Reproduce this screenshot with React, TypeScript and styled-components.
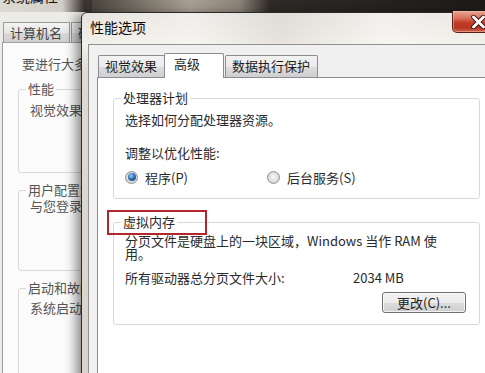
import styled, { createGlobalStyle } from "styled-components";

const GlobalStyle = createGlobalStyle`
    html, body {
        margin: 0;
        padding: 0;
    }
    body {
        width: 485px;
        height: 373px;
        overflow: hidden;
        background: linear-gradient(
            90deg,
            #3a3531 0px,
            #2b2724 60px,
            #6f685f 130px,
            #a9a194 190px,
            #8b8378 240px,
            #2e2a27 270px,
            #1d1b19 100%
        );
        font-family: "Noto Sans CJK SC", "Liberation Sans", sans-serif;
        font-size: 13px;
        color: #2a2a2a;
    }
`;

const Desktop = styled.div`
    position: relative;
    width: 485px;
    height: 373px;
    overflow: hidden;
`;

/* ---------- back window (系统属性), only its left strip is visible ---------- */

const BackWindow = styled.div`
    position: absolute;
    z-index: 0;
    left: -8px;
    top: -26px;
    width: 100px;
    height: 420px;
    overflow: hidden;
    display: flex;
    flex-direction: column;
    background: #dcd9d3;
`;

const BackTitleBar = styled.div`
    height: 38px;
    flex: none;
    display: flex;
    align-items: flex-end;
    padding: 0 0 6px 10px;
    box-sizing: border-box;
    font-size: 14px;
    color: #111;
    white-space: nowrap;
    background: linear-gradient(90deg, #dedbd5 0px, #d3cfc8 70px, #3a3531 92px);
`;

const BackClient = styled.div`
    flex: 1;
    display: flex;
    flex-direction: column;
    margin-left: 8px;
    padding: 10px 0 0 2px;
    background: #ecebe8;
`;

const TabRow = styled.div`
    display: flex;
    align-items: flex-end;
    position: relative;
    z-index: 1;
`;

const BackTab = styled.div<{ $w: number }>`
    flex: none;
    width: ${(p) => p.$w}px;
    height: 20px;
    box-sizing: border-box;
    margin-left: 1px;
    border: 1px solid #9a9a9a;
    border-bottom: none;
    padding-left: 6px;
    line-height: 19px;
    color: #444;
    white-space: nowrap;
    overflow: hidden;
    background: linear-gradient(#f4f4f4, #e6e6e6 50%, #d9d9d9 50%, #d0d0d0);
`;

const BackPanel = styled.div`
    flex: 1;
    background: #fbfbfb;
    border: 1px solid #a0a0a0;
    padding: 13px 0 0 15px;
    color: #555;
`;

const BackIntro = styled.div`
    line-height: 16px;
    margin-left: 4px;
    margin-bottom: 9px;
    white-space: nowrap;
`;

const BackGroup = styled.fieldset<{ $pb: number; $mt?: number }>`
    width: 250px;
    margin: ${(p) => p.$mt ?? 0}px 0 0 0;
    padding: 0 10px ${(p) => p.$pb}px 11px;
    border: 1px solid #d8d8d8;
    border-radius: 3px;
    line-height: 16px;
    white-space: nowrap;
    legend {
        padding: 0 2px;
        margin-left: -4px;
        line-height: 16px;
    }
`;

const BackGroupText = styled.div<{ $mt?: number }>`
    margin-top: ${(p) => p.$mt ?? 0}px;
`;

/* ---------- front dialog (性能选项) ---------- */

const Dialog = styled.div`
    position: absolute;
    z-index: 2;
    left: 81px;
    top: 12px;
    width: 424px;
    height: 380px;
    border: 1px solid #2c2a28;
    border-radius: 6px 6px 0 0;
    padding: 0 6px;
    display: flex;
    flex-direction: column;
    background: linear-gradient(180deg, #e6e4df 0px, #eeebe5 20px, #f2f0eb 32px, #dedad2 60px, #d8d4cc);
    box-shadow: -5px 2px 12px rgba(0, 0, 0, 0.45);
`;

const TitleBar = styled.div`
    height: 31px;
    flex: none;
    display: flex;
    align-items: center;
    padding: 0 0 3px 2px;
    box-sizing: border-box;
    font-size: 14px;
    color: #0c0c0c;
    background: linear-gradient(
        90deg,
        rgba(255, 255, 255, 0) 0%,
        rgba(255, 255, 255, 0.35) 25%,
        rgba(210, 205, 195, 0.35) 45%,
        rgba(255, 255, 255, 0.4) 70%,
        rgba(255, 255, 255, 0) 100%
    );
`;

const CloseButton = styled.div`
    position: absolute;
    left: 370px;
    top: -2px;
    width: 44px;
    height: 22px;
    box-sizing: border-box;
    border: 1px solid #5b1e16;
    border-top: none;
    border-radius: 0 0 5px 5px;
    display: flex;
    align-items: center;
    justify-content: center;
    padding-left: 8px;
    background: linear-gradient(180deg, #e9a593 0%, #d7705c 35%, #c23e28 55%, #b93422 80%, #d06a50 100%);
    box-shadow: inset 0 0 0 1px rgba(255, 200, 180, 0.45);
`;

const Client = styled.div`
    flex: 1;
    display: flex;
    flex-direction: column;
    border: 1px solid #8e8f90;
    padding: 8px 0 0 8px;
    background: #f0f0f0;
`;

const Tab = styled.div<{ $w: number; $active?: boolean }>`
    width: ${(p) => p.$w}px;
    height: ${(p) => (p.$active ? 25 : 22)}px;
    margin-bottom: ${(p) => (p.$active ? -1 : 0)}px;
    margin-left: ${(p) => (p.$active ? -1 : 1)}px;
    box-sizing: border-box;
    border: 1px solid #898c95;
    border-bottom: none;
    border-radius: 2px 2px 0 0;
    padding-left: ${(p) => (p.$active ? 9 : 6)}px;
    line-height: 20px;
    color: #1e1e1e;
    background: ${(p) =>
        p.$active ? "#ffffff" : "linear-gradient(#f2f2f2, #ebebeb 50%, #dddddd 50%, #cfcfcf)"};
`;

const Panel = styled.div`
    position: relative;
    flex: 1;
    display: flex;
    flex-direction: column;
    background: #ffffff;
    border: 1px solid #898c95;
    border-right: none;
    padding: 12px 0 0 15px;
`;

const GroupBox = styled.fieldset<{ $mt?: number }>`
    width: 367px;
    box-sizing: border-box;
    margin: ${(p) => p.$mt ?? 0}px 0 0 0;
    padding: 0 13px 0 11px;
    border: 1px solid #d5dadf;
    border-radius: 3px;
    legend {
        padding: 0 2px;
        margin-left: -4px;
        line-height: 16px;
        color: #2a2a2a;
    }
`;

const Line = styled.div<{ $mt?: number }>`
    line-height: 16px;
    margin-top: ${(p) => p.$mt ?? 0}px;
`;

const Wrapped = styled.div`
    margin-top: 4px;
    div {
        line-height: 13px;
        white-space: nowrap;
    }
`;

const RadioRow = styled.div`
    display: flex;
    align-items: center;
    height: 16px;
    margin: 8px 0 13px;
`;

const RadioOption = styled.label<{ $w?: number }>`
    display: flex;
    align-items: center;
    gap: 7px;
    width: ${(p) => (p.$w ? `${p.$w}px` : "auto")};
`;

const RadioDot = styled.span<{ $on?: boolean }>`
    width: 13px;
    height: 13px;
    box-sizing: border-box;
    border-radius: 50%;
    border: 1px solid #8e9092;
    display: inline-flex;
    align-items: center;
    justify-content: center;
    background: radial-gradient(circle at 50% 45%, #f6f6f6 0%, #dcdcdc 60%, #c8c8c8 100%);
    &::after {
        content: "";
        display: ${(p) => (p.$on ? "block" : "none")};
        width: 8px;
        height: 8px;
        border-radius: 50%;
        background: radial-gradient(circle at 40% 35%, #9fd0f5 0%, #2d73b8 45%, #0d3763 100%);
    }
`;

const SizeRow = styled.div`
    display: flex;
    line-height: 16px;
    margin-top: 10px;
`;

const SizeLabel = styled.span`
    width: 228px;
`;

const ButtonRow = styled.div`
    display: flex;
    justify-content: flex-end;
    margin: 6px 0 11px;
`;

const Button = styled.button`
    width: 84px;
    height: 21px;
    padding: 0;
    font-family: inherit;
    font-size: 13px;
    line-height: 19px;
    color: #222;
    border: 1px solid #707070;
    border-radius: 3px;
    background: linear-gradient(#f2f2f2, #ebebeb 50%, #dddddd 50%, #cfcfcf);
    box-shadow: inset 0 0 0 1px rgba(255, 255, 255, 0.7);
`;

const Annotation = styled.div`
    position: absolute;
    left: 9px;
    top: 132px;
    width: 100px;
    height: 25px;
    box-sizing: border-box;
    border: 2px solid #b3262b;
`;

export default function App() {
    return (
        <Desktop>
            <GlobalStyle />
            <BackWindow>
                <BackTitleBar>系统属性</BackTitleBar>
                <BackClient>
                    <TabRow>
                        <BackTab $w={67}>计算机名</BackTab>
                        <BackTab $w={50}>硬件</BackTab>
                    </TabRow>
                    <BackPanel>
                        <BackIntro>要进行大多数更改</BackIntro>
                        <BackGroup $pb={54}>
                            <legend>性能</legend>
                            <BackGroupText $mt={5}>视觉效果，处理器计划</BackGroupText>
                        </BackGroup>
                        <BackGroup $pb={56} $mt={9}>
                            <legend>用户配置文件</legend>
                            <BackGroupText>与您登录有关</BackGroupText>
                        </BackGroup>
                        <BackGroup $pb={60} $mt={9}>
                            <legend>启动和故障恢复</legend>
                            <BackGroupText $mt={4}>系统启动、系统失败</BackGroupText>
                        </BackGroup>
                    </BackPanel>
                </BackClient>
            </BackWindow>

            <Dialog>
                <TitleBar>性能选项</TitleBar>
                <CloseButton>
                    <svg width="15" height="14" viewBox="0 0 15 14">
                        <path d="M2.5 2 L12.5 12 M12.5 2 L2.5 12" stroke="#3a1410" strokeWidth="4.6" strokeLinecap="round" />
                        <path d="M2.5 2 L12.5 12 M12.5 2 L2.5 12" stroke="#ffffff" strokeWidth="2.8" strokeLinecap="round" />
                    </svg>
                </CloseButton>
                <Client>
                    <TabRow>
                        <Tab $w={67}>视觉效果</Tab>
                        <Tab $w={60} $active>高级</Tab>
                        <Tab $w={93}>数据执行保护</Tab>
                    </TabRow>
                    <Panel>
                        <GroupBox>
                            <legend>处理器计划</legend>
                            <Line $mt={6}>选择如何分配处理器资源。</Line>
                            <Line $mt={17}>调整以优化性能:</Line>
                            <RadioRow>
                                <RadioOption $w={142}>
                                    <RadioDot $on />
                                    程序(P)
                                </RadioOption>
                                <RadioOption>
                                    <RadioDot />
                                    后台服务(S)
                                </RadioOption>
                            </RadioRow>
                        </GroupBox>
                        <GroupBox $mt={15}>
                            <legend>虚拟内存</legend>
                            <Wrapped>
                                <div>分页文件是硬盘上的一块区域，Windows 当作 RAM 使</div>
                                <div>用。</div>
                            </Wrapped>
                            <SizeRow>
                                <SizeLabel>所有驱动器总分页文件大小:</SizeLabel>
                                <span>2034 MB</span>
                            </SizeRow>
                            <ButtonRow>
                                <Button>更改(C)...</Button>
                            </ButtonRow>
                        </GroupBox>
                        <Annotation />
                    </Panel>
                </Client>
            </Dialog>
        </Desktop>
    );
}
